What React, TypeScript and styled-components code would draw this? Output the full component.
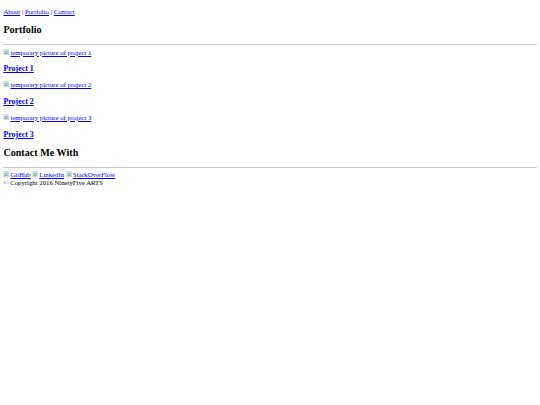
import React from "react";
import styled, { createGlobalStyle } from "styled-components";

const GlobalStyle = createGlobalStyle`
  html, body { background: #ffffff; }
  body {
    margin: 3.375px;
    font-family: "Liberation Serif", "Times New Roman", serif;
    font-size: 6.75px;
    line-height: 1.15;
    color: #000000;
  }
`;

const NavBar = styled.p`
  margin: 4.75px 0 6.75px;
`;

const Link = styled.a`
  color: #0000ee;
  text-decoration: underline;
  cursor: pointer;
`;

const SectionHeading = styled.h2`
  font-size: 10.125px;
  font-weight: bold;
  margin: 8.4px 0;
`;

const Rule = styled.hr`
  margin: 3.375px 0;
  border: none;
  border-top: 1px solid #c9c9c9;
  height: 0;
`;

const ProjectTitle = styled.h3`
  font-size: 7.9px;
  font-weight: bold;
  margin: 7.9px 0;
`;

const BrokenIconSvg = styled.svg`
  width: 6.5px;
  height: 6.5px;
  vertical-align: -0.5px;
  margin-right: 0.5px;
`;

const Footer = styled.footer``;

const SocialRow = styled.div``;

const Copyright = styled.div``;

function BrokenIcon() {
  return (
    <BrokenIconSvg viewBox="0 0 16 16" aria-hidden="true">
      <path d="M2 1.5h8.5l3.5 3.5v9.5H2z" fill="#f4f4f4" stroke="#9a9a9a" strokeWidth="1" />
      <path d="M10.5 1.5v3.5h3.5" fill="none" stroke="#9a9a9a" strokeWidth="1" />
      <rect x="3.5" y="5" width="8" height="4" fill="#7ab8e8" />
      <path d="M3.5 12.5l3-3.5 2.5 2.5 1.5-1.5 2 2.5z" fill="#5aa64a" />
    </BrokenIconSvg>
  );
}

function ImageLink({ alt }: { alt: string }) {
  return (
    <Link href="#">
      <BrokenIcon />
      {alt}
    </Link>
  );
}

const projects = [1, 2, 3];

export default function App() {
  return (
    <>
      <GlobalStyle />
      <header>
        <NavBar>
          <Link href="#">About</Link> | <Link href="#">Portfolio</Link> | <Link href="#">Contact</Link>
        </NavBar>
      </header>
      <main>
        <SectionHeading>Portfolio</SectionHeading>
        <Rule />
        {projects.map((n) => (
          <section key={n}>
            <ImageLink alt={`temporary picture of project ${n}`} />
            <ProjectTitle>
              <Link href="#">Project {n}</Link>
            </ProjectTitle>
          </section>
        ))}
        <SectionHeading>Contact Me With</SectionHeading>
        <Rule />
      </main>
      <Footer>
        <SocialRow>
          <ImageLink alt="GitHub" /> <ImageLink alt="LinkedIn" /> <ImageLink alt="StackOverFlow" />
        </SocialRow>
        <Copyright>© Copyright 2016 NinetyFive ARTS</Copyright>
      </Footer>
    </>
  );
}
